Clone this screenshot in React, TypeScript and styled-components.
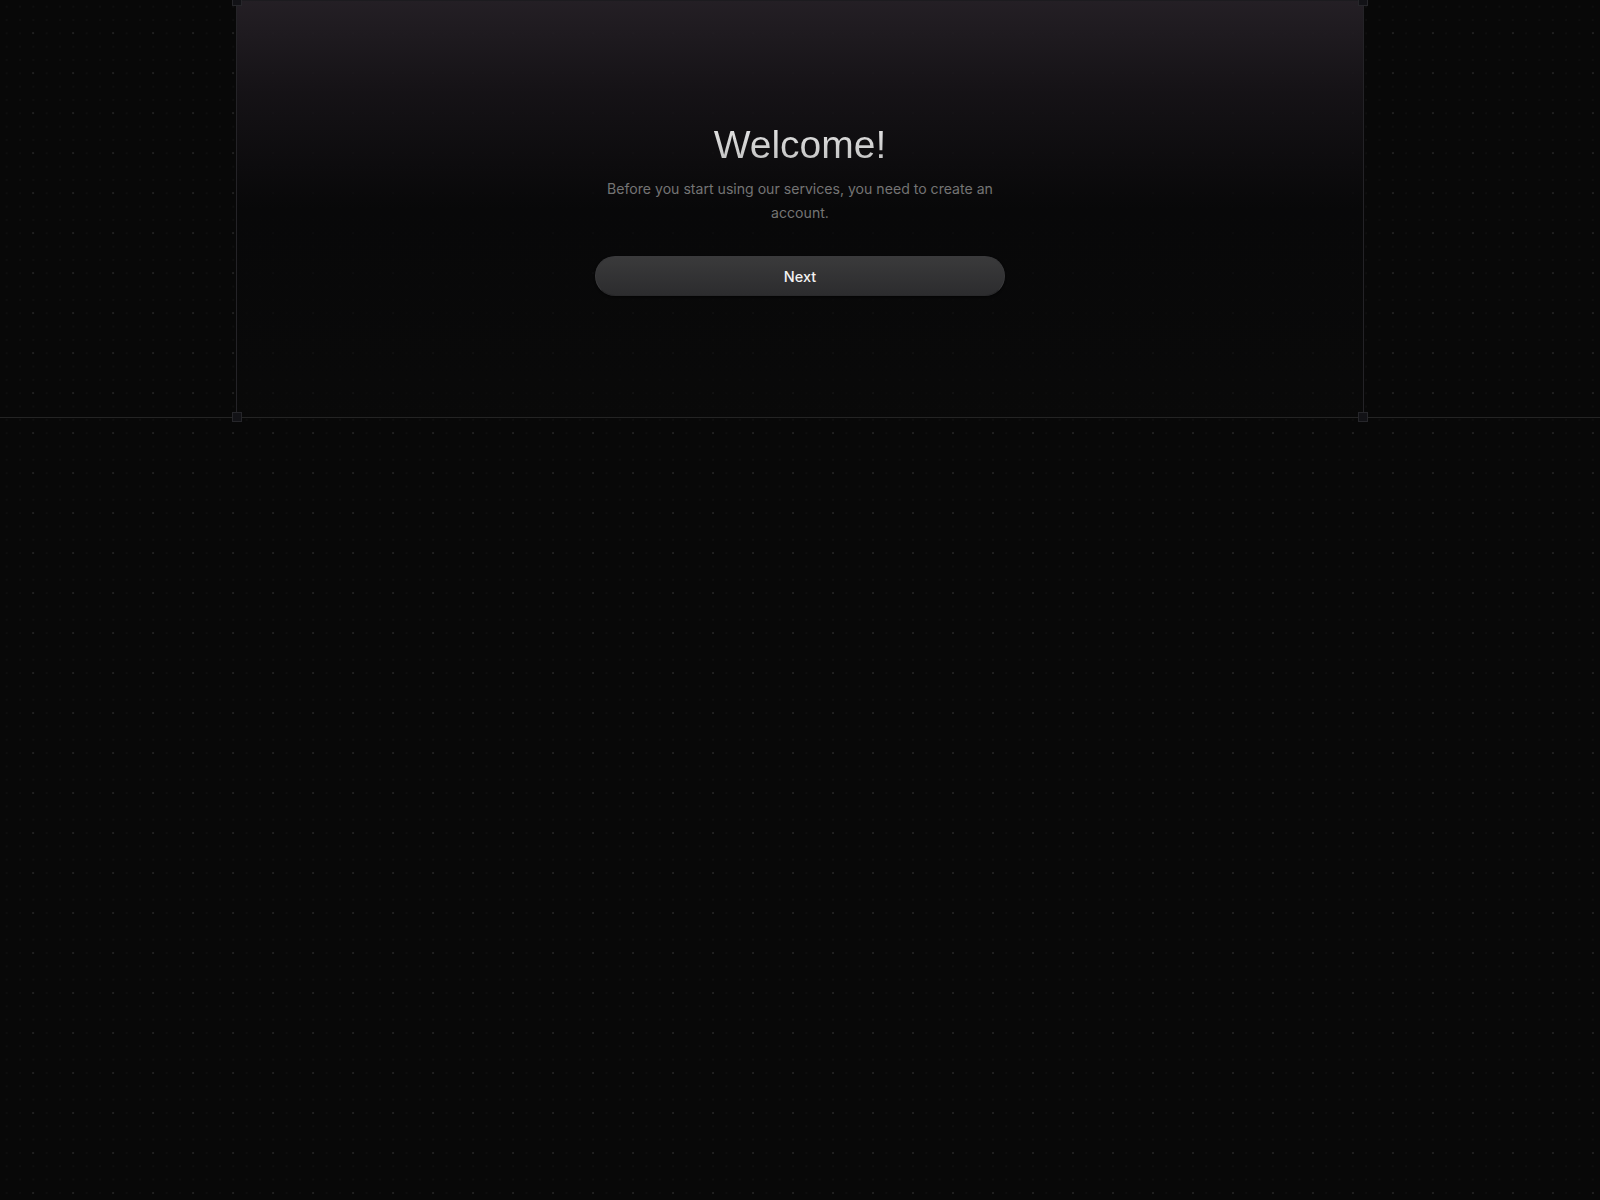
import React from 'react'
import styled, { createGlobalStyle } from 'styled-components'

const GlobalStyle = createGlobalStyle`
  html, body {
    margin: 0;
    padding: 0;
    background: #080808;
  }
  body {
    font-family: 'Inter', 'Noto Sans', sans-serif;
    min-height: 1200px;
    background-color: #080808;
    background-image:
      radial-gradient(rgba(255, 255, 255, 0.07) 0.8px, transparent 1px),
      radial-gradient(rgba(255, 255, 255, 0.035) 0.6px, transparent 0.9px);
    background-size: 40px 40px, 13.333px 13.333px;
    background-position: 13px 13px, 0 0;
  }
`

const Band = styled.section`
  width: 100%;
  border-bottom: 1px solid #242424;
  display: flex;
  justify-content: center;
`

const Frame = styled.div`
  position: relative;
  width: 1128px;
  height: 417px;
  box-sizing: border-box;
  border-left: 1px solid #242327;
  border-right: 1px solid #242327;
  border-top: 1px solid #1c1b1f;
  background: linear-gradient(180deg, rgba(37, 32, 38, 0.95) 0%, rgba(22, 19, 23, 0.92) 22%, rgba(8, 8, 9, 0.88) 50%, rgba(10, 10, 10, 0.6) 100%);
  display: flex;
  flex-flow: column nowrap;
  align-items: center;
  padding-top: 120px;
`

const Corner = styled.span<{ $top?: boolean; $right?: boolean }>`
  position: absolute;
  width: 10px;
  height: 10px;
  box-sizing: border-box;
  background: #121216;
  border: 1px solid #26262a;
  ${(p) => (p.$top ? 'top: -5px;' : 'bottom: -5px;')}
  ${(p) => (p.$right ? 'right: -5px;' : 'left: -5px;')}
`

const Title = styled.h1`
  margin: 0;
  font-family: 'Liberation Sans', Arial, sans-serif;
  font-weight: 400;
  font-size: 39px;
  line-height: 48px;
  letter-spacing: 0;
  background: linear-gradient(180deg, #e8e8e8 0%, #bcbcbc 100%);
  -webkit-background-clip: text;
  background-clip: text;
  color: transparent;
`

const Desc = styled.p`
  margin: 8px 0 0;
  max-width: 400px;
  font-family: 'Inter', sans-serif;
  font-size: 14.1px;
  line-height: 24px;
  text-align: center;
  color: #747474;
`

const NextButton = styled.button`
  margin-top: 31px;
  width: 410px;
  height: 40px;
  border-radius: 20px;
  border: 1px solid #3a3a3c;
  border-bottom-color: #29292b;
  background: linear-gradient(180deg, #3a3a3b 0%, #2c2c2e 100%);
  color: #f2f2f2;
  font-family: 'Inter', sans-serif;
  font-weight: 450;
  font-size: 14.5px;
  cursor: pointer;
  box-shadow: 0 1px 2px rgba(0, 0, 0, 0.5);
`

const App = () => {
  return (
    <>
      <GlobalStyle />
      <Band>
        <Frame>
          <Corner $top />
          <Corner $top $right />
          <Corner />
          <Corner $right />
          <Title>Welcome!</Title>
          <Desc>Before you start using our services, you need to create an account.</Desc>
          <NextButton type="button">Next</NextButton>
        </Frame>
      </Band>
    </>
  )
}

export default App
